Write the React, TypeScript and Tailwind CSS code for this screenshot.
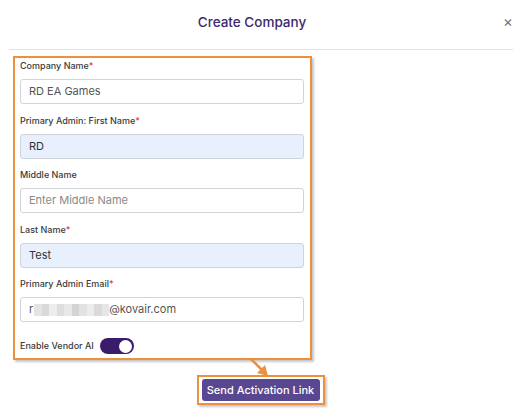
import React from "react";

const fields = [
  { label: "Company Name", required: true, value: "RD EA Games", filled: false },
  { label: "Primary Admin: First Name", required: true, value: "RD", filled: true },
  { label: "Middle Name", required: false, value: "", placeholder: "Enter Middle Name", filled: false },
  { label: "Last Name", required: true, value: "Test", filled: true },
];

const mosaic = ["#e4e4e4", "#d9d9d9", "#ededed", "#dedede", "#e8e8e8", "#d4d4d4", "#e2e2e2", "#ececec", "#dadada", "#e6e6e6"];

function Label({ text, required }: { text: string; required?: boolean }) {
  return (
    <div className="h-[12px] text-[9px] leading-[12px] font-medium text-[#3a3a3a] mb-[7px]">
      {text}
      {required && <span className="text-[#e53935]">*</span>}
    </div>
  );
}

function Field({ label, required, value, placeholder, filled }: { label: string; required?: boolean; value: string; placeholder?: string; filled?: boolean }) {
  return (
    <div>
      <Label text={label} required={required} />
      <div
        className={`h-[25px] rounded-[3px] border border-[#cfd4da] px-[8px] flex items-center text-[11px] ${
          filled ? "bg-[#e8f0fe] text-[#333]" : "bg-white text-[#555]"
        }`}
      >
        {value ? value : <span className="text-[#8a8a8a]">{placeholder}</span>}
      </div>
    </div>
  );
}

export default function App() {
  return (
    <div className="relative w-[522px] h-[419px] bg-white overflow-hidden font-['Inter',sans-serif]">
      {/* header */}
      <div className="mx-[9px] h-[50px] border-b border-[#e2e2e2] flex items-center justify-center relative">
        <span className="text-[13.5px] font-medium text-[#3b2a6c] mr-[18px] -mt-[4px]">Create Company</span>
        <span className="absolute right-[0px] top-[14px] text-[15px] leading-none text-[#777]">×</span>
      </div>

      {/* form, highlighted */}
      <div className="ml-[13px] mt-[6px] w-[299px] border-2 border-[#ec8f3e] shadow-[2px_2px_2px_rgba(0,0,0,0.22)] pt-[2px] pb-[4px] pl-[5px] pr-[6px]">
        <div className="flex flex-col gap-[10.5px]">
          {fields.map((f) => (
            <Field key={f.label} {...f} />
          ))}
          <div>
            <Label text="Primary Admin Email" required />
            <div className="h-[25px] rounded-[3px] border border-[#cfd4da] px-[8px] flex items-center text-[11px] text-[#555]">
              <span>r</span>
              <span className="flex h-[12px] ml-[1px]">
                {mosaic.map((c, i) => (
                  <span key={i} className="w-[7.5px] h-full" style={{ backgroundColor: c }} />
                ))}
              </span>
              <span>@kovair.com</span>
            </div>
          </div>
        </div>
        <div className="mt-[16px] flex items-center h-[16px]">
          <span className="text-[9px] font-medium text-[#3a3a3a] w-[80px]">Enable Vendor AI</span>
          <div className="w-[34px] h-[16px] rounded-full bg-[#3a1c6c] flex items-center justify-end pr-[2px]">
            <div className="w-[13px] h-[13px] rounded-full bg-white" />
          </div>
        </div>
      </div>

      {/* button, highlighted */}
      <div className="mt-[15px] flex justify-center">
        <div className="ml-[-1px] border-2 border-[#ec8f3e] shadow-[2px_2px_2px_rgba(0,0,0,0.22)] pt-[2px] pb-[2px] px-[3px]">
          <div className="h-[22px] w-[118px] rounded-[3px] bg-[#5a4791] flex items-center justify-center text-white text-[11px] font-medium">
            Send Activation Link
          </div>
        </div>
      </div>

      {/* annotation arrow */}
      <svg className="absolute left-[244px] top-[356px]" width="30" height="24" viewBox="0 0 30 24">
        <line x1="7" y1="3" x2="18" y2="14" stroke="#ec8f3e" strokeWidth="2.5" />
        <polygon points="24,20 13,17 21,9" fill="#ec8f3e" />
      </svg>
    </div>
  );
}
